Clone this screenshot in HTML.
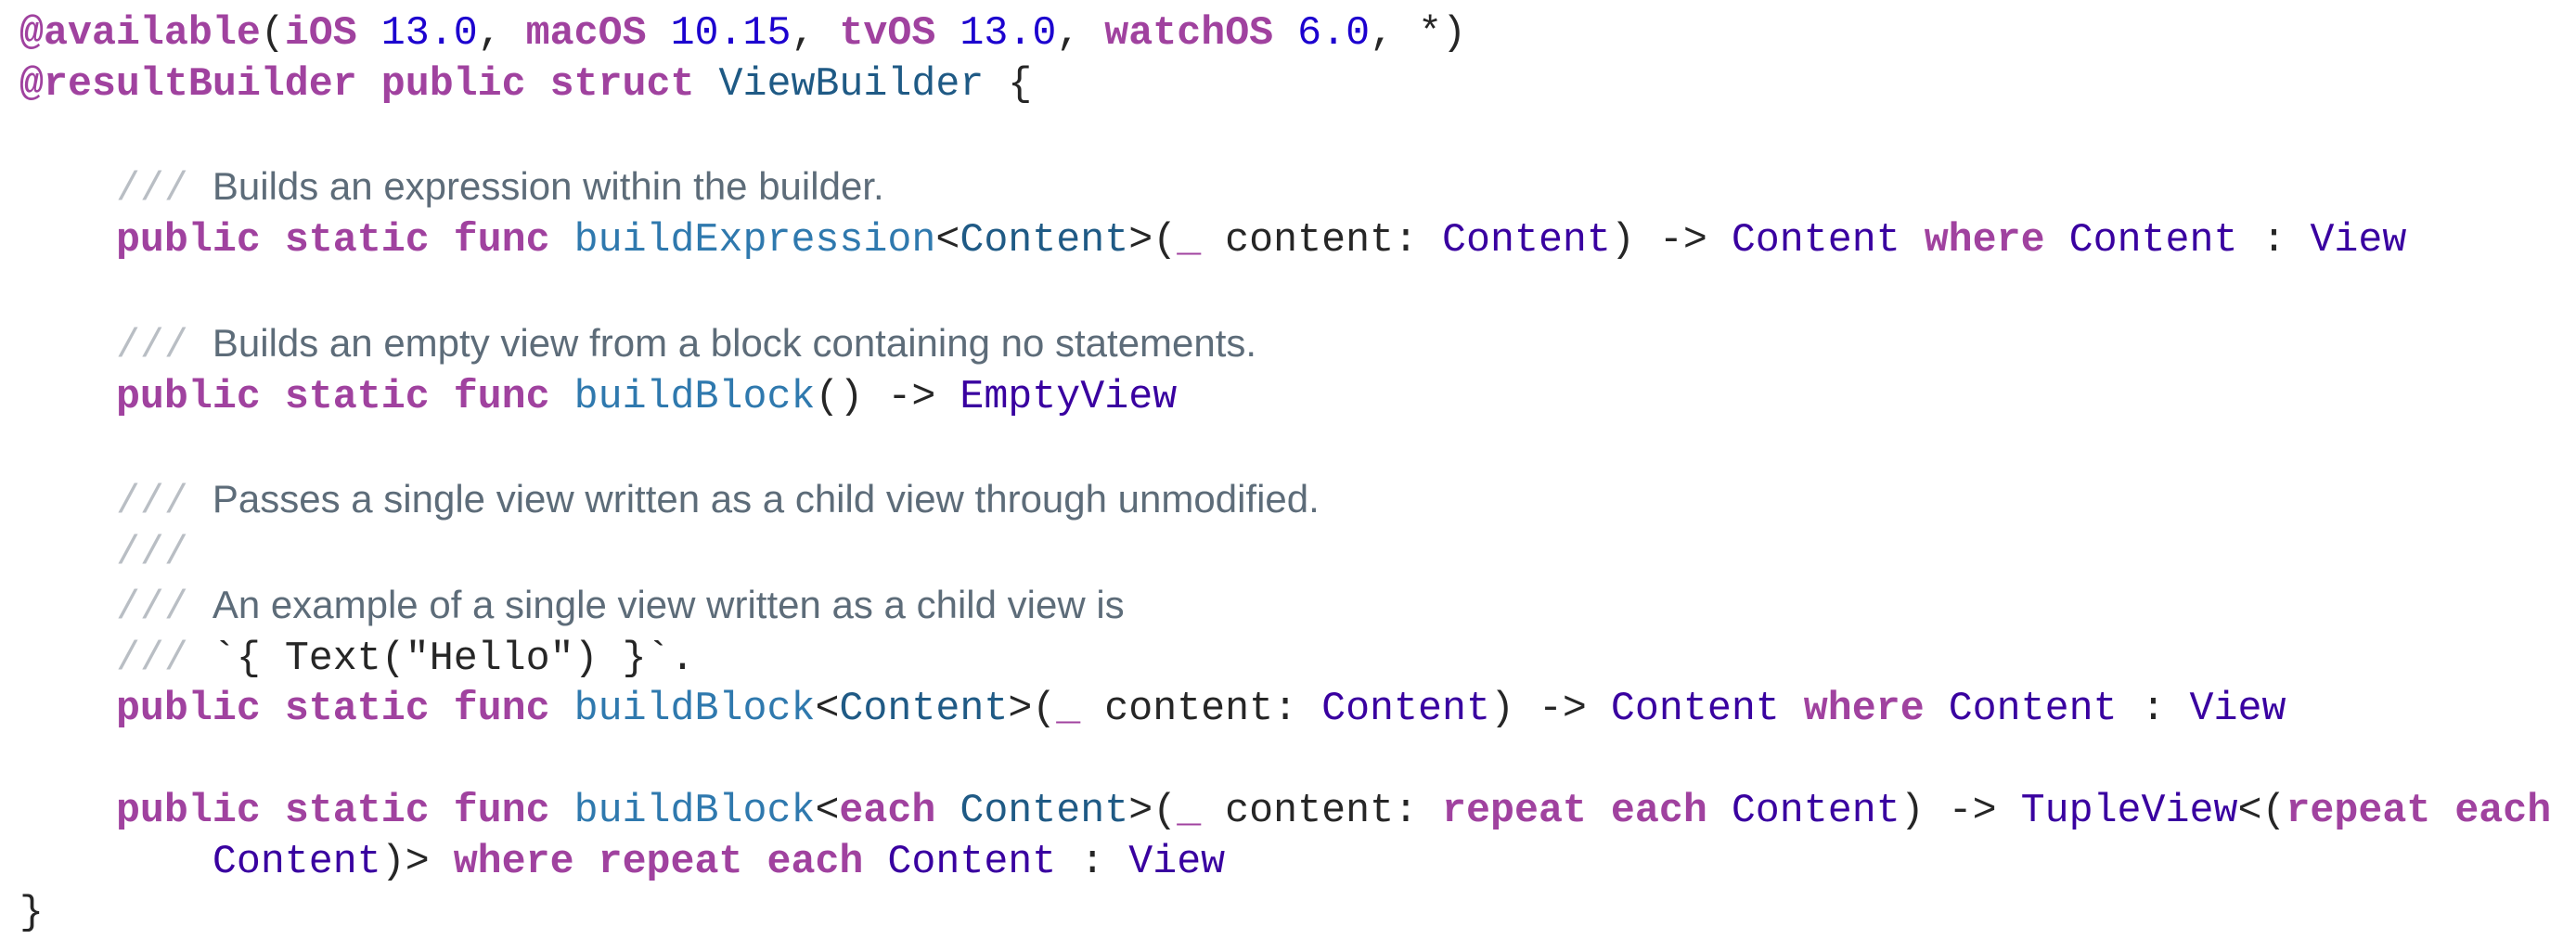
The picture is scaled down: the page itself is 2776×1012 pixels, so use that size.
<!DOCTYPE html>
<html><head><meta charset="utf-8"><style>
html,body{margin:0;padding:0;background:#fff;width:2776px;height:1012px;overflow:hidden}
pre{margin:0;padding:10px 0 0 21px;font-family:"Liberation Mono",monospace;font-size:43.3px;line-height:54.8px;color:#262626;white-space:pre}
.k{color:#A0429F;font-weight:bold}
.n{color:#1C00CF}
.t{color:#3900A0}
.d{color:#1F5A85}
.f{color:#2F79AE}
.s{color:#B9BEC4}
.c{color:#5D6C79;font-family:"Liberation Sans",sans-serif;font-size:42px}
</style></head><body><pre><span class="k">@available</span>(<span class="k">iOS</span> <span class="n">13.0</span>, <span class="k">macOS</span> <span class="n">10.15</span>, <span class="k">tvOS</span> <span class="n">13.0</span>, <span class="k">watchOS</span> <span class="n">6.0</span>, *)
<span class="k">@resultBuilder public struct</span> <span class="d">ViewBuilder</span> {

    <span class="s">///</span> <span class="c">Builds an expression within the builder.</span>
    <span class="k">public static func</span> <span class="f">buildExpression</span>&lt;<span class="d">Content</span>&gt;(<span class="k">_</span> content: <span class="t">Content</span>) -&gt; <span class="t">Content</span> <span class="k">where</span> <span class="t">Content</span> : <span class="t">View</span>

    <span class="s">///</span> <span class="c">Builds an empty view from a block containing no statements.</span>
    <span class="k">public static func</span> <span class="f">buildBlock</span>() -&gt; <span class="t">EmptyView</span>

    <span class="s">///</span> <span class="c">Passes a single view written as a child view through unmodified.</span>
    <span class="s">///</span>
    <span class="s">///</span> <span class="c">An example of a single view written as a child view is</span>
    <span class="s">///</span> `{ Text("Hello") }`.
    <span class="k">public static func</span> <span class="f">buildBlock</span>&lt;<span class="d">Content</span>&gt;(<span class="k">_</span> content: <span class="t">Content</span>) -&gt; <span class="t">Content</span> <span class="k">where</span> <span class="t">Content</span> : <span class="t">View</span>

    <span class="k">public static func</span> <span class="f">buildBlock</span>&lt;<span class="k">each</span> <span class="d">Content</span>&gt;(<span class="k">_</span> content: <span class="k">repeat each</span> <span class="t">Content</span>) -&gt; <span class="t">TupleView</span>&lt;(<span class="k">repeat each</span>
        <span class="t">Content</span>)&gt; <span class="k">where repeat each</span> <span class="t">Content</span> : <span class="t">View</span>
}</pre></body></html>
